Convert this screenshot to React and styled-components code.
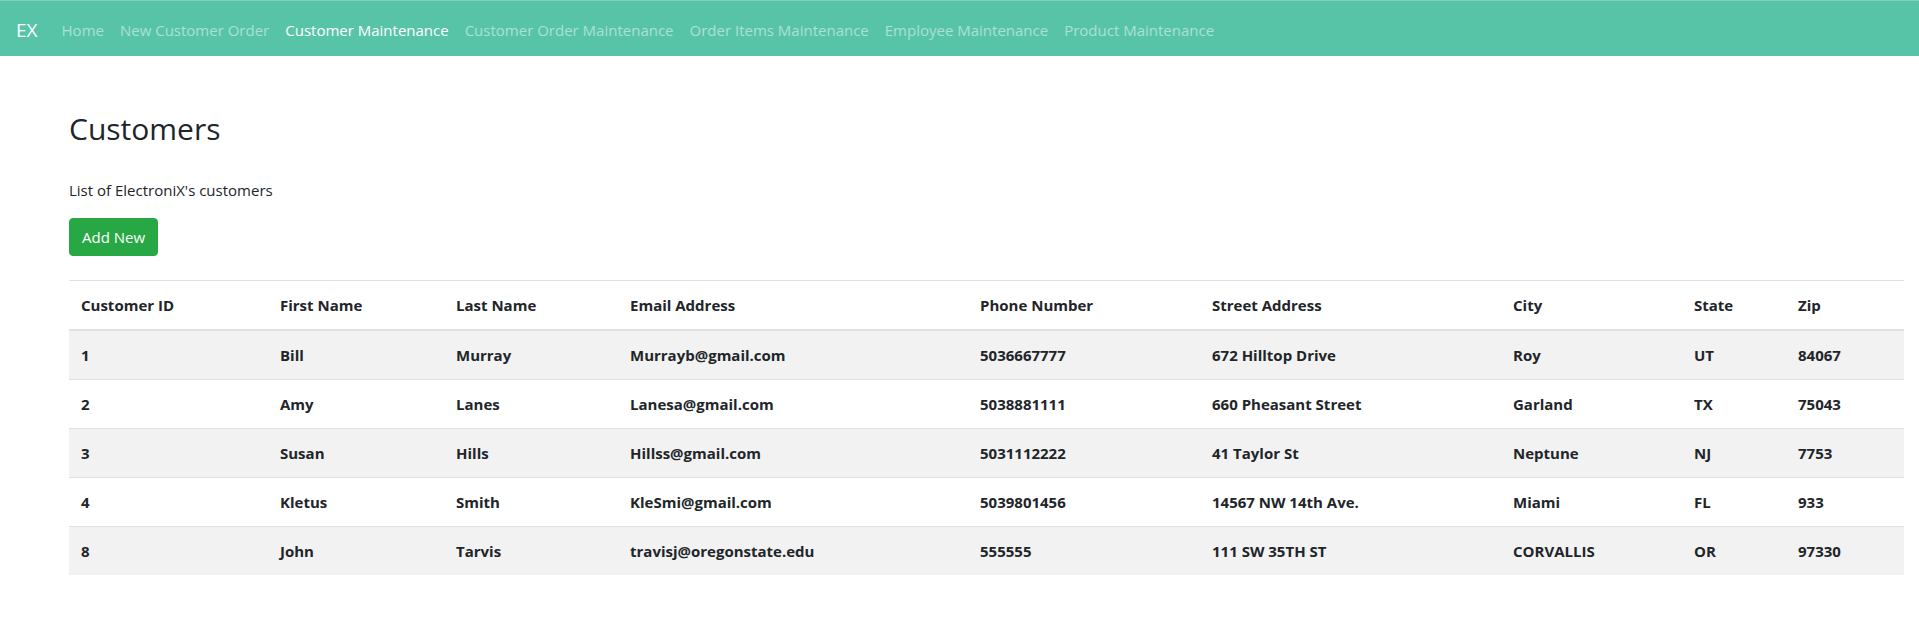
import React from 'react';
import styled, { createGlobalStyle } from 'styled-components';

const GlobalStyle = createGlobalStyle`
  * {
    box-sizing: border-box;
  }
  body {
    margin: 0;
    background: #fff;
    color: #212529;
    font-family: "Open Sans", "Noto Sans", Arial, sans-serif;
    font-size: 15px;
    line-height: 24px;
  }
`;

const NavBar = styled.nav`
  display: flex;
  align-items: center;
  height: 56px;
  padding: 9px 16px 7px;
  background: #57c4a8;
  border-top: 1px solid #7ed1bb;
`;

const Brand = styled.span`
  color: #fff;
  font-size: 19px;
  line-height: 30px;
  padding: 5px 0;
  margin-right: 16px;
`;

const NavLinks = styled.div`
  display: flex;
`;

const NavLink = styled.a`
  padding: 8px;
  color: ${(p) => (p.$active ? '#fff' : 'rgba(255, 255, 255, 0.5)')};
  text-decoration: none;
  cursor: pointer;
`;

const Page = styled.main`
  padding: 51px 15px 0 69px;
`;

const Title = styled.h2`
  margin: 3px 0 30px;
  font-size: 30px;
  font-weight: 500;
  line-height: 38px;
`;

const Lead = styled.p`
  margin: 0 0 16px;
`;

const AddButton = styled.button`
  display: inline-block;
  height: 38px;
  padding: 6px 12px;
  border: 1px solid #28a745;
  border-radius: 4px;
  background: #28a745;
  color: #fff;
  font: inherit;
  cursor: pointer;
`;

const Table = styled.table`
  width: 100%;
  margin-top: 24px;
  border-collapse: collapse;
  table-layout: fixed;
`;

const Col = styled.col`
  width: ${(p) => p.$w}px;
`;

const HeadCell = styled.th`
  padding: 12px;
  text-align: left;
  font-weight: 700;
  border-top: 1px solid #dee2e6;
  border-bottom: 2px solid #dee2e6;
`;

const Row = styled.tr`
  &:nth-child(odd) {
    background: #f2f2f2;
  }
`;

const Cell = styled.td`
  padding: 12px;
  font-weight: 700;
  border-top: 1px solid #dee2e6;
  white-space: nowrap;
`;

const links = [
  'Home',
  'New Customer Order',
  'Customer Maintenance',
  'Customer Order Maintenance',
  'Order Items Maintenance',
  'Employee Maintenance',
  'Product Maintenance',
];

const columns = [
  ['Customer ID', 199],
  ['First Name', 176],
  ['Last Name', 174],
  ['Email Address', 350],
  ['Phone Number', 232],
  ['Street Address', 301],
  ['City', 181],
  ['State', 104],
  ['Zip', 118],
];

const customers = [
  [1, 'Bill', 'Murray', 'Murrayb@gmail.com', '5036667777', '672 Hilltop Drive', 'Roy', 'UT', '84067'],
  [2, 'Amy', 'Lanes', 'Lanesa@gmail.com', '5038881111', '660 Pheasant Street', 'Garland', 'TX', '75043'],
  [3, 'Susan', 'Hills', 'Hillss@gmail.com', '5031112222', '41 Taylor St', 'Neptune', 'NJ', '7753'],
  [4, 'Kletus', 'Smith', 'KleSmi@gmail.com', '5039801456', '14567 NW 14th Ave.', 'Miami', 'FL', '933'],
  [8, 'John', 'Tarvis', 'travisj@oregonstate.edu', '555555', '111 SW 35TH ST', 'CORVALLIS', 'OR', '97330'],
];

export default function App() {
  return (
    <>
      <GlobalStyle />
      <NavBar>
        <Brand>EX</Brand>
        <NavLinks>
          {links.map((l) => (
            <NavLink key={l} $active={l === 'Customer Maintenance'}>
              {l}
            </NavLink>
          ))}
        </NavLinks>
      </NavBar>
      <Page>
        <Title>Customers</Title>
        <Lead>List of ElectroniX's customers</Lead>
        <AddButton>Add New</AddButton>
        <Table>
          <colgroup>
            {columns.map(([name, w]) => (
              <Col key={name} $w={w} />
            ))}
          </colgroup>
          <thead>
            <tr>
              {columns.map(([name]) => (
                <HeadCell key={name}>{name}</HeadCell>
              ))}
            </tr>
          </thead>
          <tbody>
            {customers.map((c) => (
              <Row key={c[0]}>
                {c.map((v, i) => (
                  <Cell key={i}>{v}</Cell>
                ))}
              </Row>
            ))}
          </tbody>
        </Table>
      </Page>
    </>
  );
}
